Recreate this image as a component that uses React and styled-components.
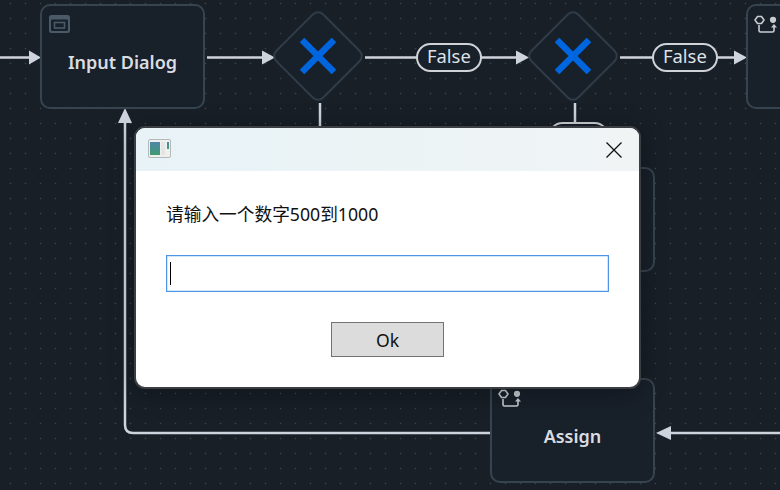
import React from 'react';
import styled, { createGlobalStyle } from 'styled-components';

const GlobalStyle = createGlobalStyle`
  html, body {
    margin: 0;
    padding: 0;
    background: #181f27;
  }
`;

const FONT = `"Noto Sans", "Noto Sans CJK SC", sans-serif`;
const EDGE = '#ced3dd';

// ---------------- ICONS ----------------
const DialogIcon = () => (
  <svg width="22" height="19" viewBox="0 0 22 19">
    <rect x="0" y="0" width="21" height="18" rx="2.5" fill="#4a5a68" />
    <rect x="2" y="4.5" width="17" height="11.5" rx="1" fill="#18202a" />
    <rect x="5.5" y="7.5" width="10" height="5.5" fill="none" stroke="#4a5a68" strokeWidth="1.6" />
  </svg>
);

const AssignIcon = () => (
  <svg width="24" height="20" viewBox="0 0 24 20" fill="none" stroke="#c9cdd2" strokeWidth="1.6">
    <path d="M3.5 1.5 L7.5 1.5 L10 5 L7.5 8.5 L3.5 8.5 L1 5 Z" />
    <circle cx="19" cy="4.8" r="3.1" fill="#c9cdd2" stroke="none" />
    <path d="M5 10 V15.5 Q5 17 6.5 17 H18.5 Q20 17 20 15.5 V11" />
    <path d="M17 12.5 L20 9 L23 12.5 Z" fill="#c9cdd2" stroke="none" />
  </svg>
);

const CrossIcon = () => (
  <svg width="36" height="36" viewBox="0 0 36 36">
    <path d="M2 2 L34 34 M34 2 L2 34" stroke="#0066e0" strokeWidth="6.5" />
  </svg>
);

const WindowIcon = () => (
  <svg width="23" height="19" viewBox="0 0 23 19">
    <defs>
      <linearGradient id="pane" x1="0" y1="0" x2="0" y2="1">
        <stop offset="0" stopColor="#4f86a8" />
        <stop offset="1" stopColor="#3f9a72" />
      </linearGradient>
    </defs>
    <rect x="0.5" y="0.5" width="22" height="18" rx="1.5" fill="#eef0ee" stroke="#b4b8ba" />
    <rect x="2" y="3" width="10" height="13" fill="url(#pane)" />
    <rect x="13" y="3" width="4" height="13" fill="#e2e5e3" />
    <rect x="19" y="3" width="2" height="7" fill="url(#pane)" />
  </svg>
);

const CloseIcon = () => (
  <svg width="16" height="16" viewBox="0 0 16 16">
    <path d="M0.5 0.5 L15.5 15.5 M15.5 0.5 L0.5 15.5" stroke="#111" strokeWidth="1.3" />
  </svg>
);

// ---------------- EDGES ----------------
const lines = [
  'M0 57.5 H30',
  'M207 57.5 H262',
  'M365 57.5 H417',
  'M480 57.5 H517',
  'M620 57.5 H653',
  'M716 57.5 H735',
  'M320 103 V130',
  'M575 103 V124',
  'M670 433 H780',
  'M491 433 H133 Q125 433 125 425 V122',
];

const arrows = [
  '41,57.5 29,50.5 29,64.5',
  '275,57.5 262,50.5 262,64.5',
  '529,57.5 516,50.5 516,64.5',
  '747,57.5 734,50.5 734,64.5',
  '656,433 671,426 671,440',
  '125,108 118,123 132,123',
];

const Edges = () => (
  <EdgeLayer viewBox="0 0 780 490">
    {lines.map(d => (
      <path key={d} d={d} fill="none" stroke={EDGE} strokeWidth="2.5" />
    ))}
    {arrows.map(p => (
      <polygon key={p} points={p} fill={EDGE} />
    ))}
  </EdgeLayer>
);

// ---------------- MAIN COMPONENT ----------------
export default function App() {
  return (
    <>
      <GlobalStyle />
      <Canvas>
        <Edges />

        <Node $x={40} $y={4}>
          <NodeIcon $dialog><DialogIcon /></NodeIcon>
          <NodeLabel>Input Dialog</NodeLabel>
        </Node>
        <Node $x={746} $y={4}>
          <NodeIcon><AssignIcon /></NodeIcon>
        </Node>
        <Node $x={490} $y={167} />
        <Node $x={490} $y={378}>
          <NodeIcon><AssignIcon /></NodeIcon>
          <NodeLabel>Assign</NodeLabel>
        </Node>

        <Gateway $x={318} $y={55.5}>
          <Diamond />
          <CrossIcon />
        </Gateway>
        <Gateway $x={573} $y={55.5}>
          <Diamond />
          <CrossIcon />
        </Gateway>

        <Pill $x={416} $y={43}>False</Pill>
        <Pill $x={652} $y={43}>False</Pill>
        <Pill $x={548} $y={122}>True</Pill>

        <Dialog>
          <TitleBar>
            <WindowIcon />
            <CloseIcon />
          </TitleBar>
          <DialogBody>
            <Message>请输入一个数字500到1000</Message>
            <TextBox>
              <Caret />
            </TextBox>
            <OkButton>Ok</OkButton>
          </DialogBody>
        </Dialog>
      </Canvas>
    </>
  );
}

// ---------------- STYLES ----------------
const Canvas = styled.div`
  position: relative;
  width: 780px;
  height: 490px;
  overflow: hidden;
  font-family: ${FONT};
  background-color: #181f27;
  background-image: radial-gradient(circle at 10.5px 3.5px, #3b434d 0.7px, transparent 1.1px);
  background-size: 15px 15px;
`;

const EdgeLayer = styled.svg`
  position: absolute;
  left: 0;
  top: 0;
  width: 780px;
  height: 490px;
`;

const Node = styled.div`
  position: absolute;
  left: ${props => props.$x}px;
  top: ${props => props.$y}px;
  box-sizing: border-box;
  width: 165px;
  height: 105px;
  padding-top: 11px;
  display: flex;
  align-items: center;
  justify-content: center;
  background: #18202a;
  border: 2px solid #36444f;
  border-radius: 10px;
`;

const NodeIcon = styled.div`
  position: absolute;
  left: ${props => props.$dialog ? '7px' : '6px'};
  top: 9px;
  display: flex;
`;

const NodeLabel = styled.div`
  font-size: 18px;
  font-weight: 600;
  line-height: 24px;
  color: #d9dde2;
`;

const Gateway = styled.div`
  position: absolute;
  left: ${props => props.$x - 46}px;
  top: ${props => props.$y - 46}px;
  width: 92px;
  height: 92px;
  display: flex;
  align-items: center;
  justify-content: center;

  svg {
    position: relative;
  }
`;

const Diamond = styled.div`
  position: absolute;
  left: 12px;
  top: 12px;
  box-sizing: border-box;
  width: 68px;
  height: 68px;
  background: #18202a;
  border: 2px solid #2f3c48;
  border-radius: 8px;
  transform: rotate(45deg);
`;

const Pill = styled.div`
  position: absolute;
  left: ${props => props.$x}px;
  top: ${props => props.$y}px;
  box-sizing: border-box;
  height: 29px;
  padding: 0 9px 5px;
  display: flex;
  align-items: center;
  font-size: 18.4px;
  color: #dfe2e6;
  background: #18202a;
  border: 2px solid #cfd2d6;
  border-radius: 15px;
`;

const Dialog = styled.div`
  position: absolute;
  left: 134px;
  top: 126px;
  box-sizing: border-box;
  width: 507px;
  height: 263px;
  background: #fff;
  border: 2px solid #3b3f44;
  border-radius: 11px;
  box-shadow: 0 4px 26px rgba(0, 0, 0, 0.32);
  overflow: hidden;
`;

const TitleBar = styled.div`
  box-sizing: border-box;
  height: 43px;
  padding: 0 17px 0 12px;
  display: flex;
  align-items: center;
  justify-content: space-between;
  background: linear-gradient(90deg, #e8f3f7, #f0f4f5);

  svg:first-child {
    margin-bottom: 2px;
  }
`;

const DialogBody = styled.div`
  padding: 31px 30px 0;
  display: flex;
  flex-direction: column;
`;

const Message = styled.div`
  font-size: 17.7px;
  line-height: 24px;
  color: #111;
`;

const TextBox = styled.div`
  box-sizing: border-box;
  height: 37px;
  margin-top: 29px;
  padding-left: 3px;
  display: flex;
  align-items: center;
  background: #fff;
  border: 1px solid #4f97e6;
  box-shadow: inset 0 0 0 0.5px #a9cdf3;
`;

const Caret = styled.div`
  width: 1px;
  height: 23px;
  background: #000;
`;

const OkButton = styled.button`
  box-sizing: border-box;
  align-self: center;
  width: 113px;
  height: 35px;
  margin-top: 30px;
  padding: 0;
  font-family: ${FONT};
  font-size: 17.6px;
  color: #111;
  background: #dcdcdc;
  border: 1.5px solid #737373;
  border-radius: 0;
`;
